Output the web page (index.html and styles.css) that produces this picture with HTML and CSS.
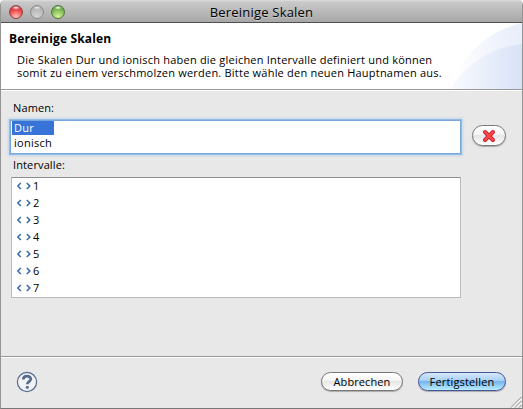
FILE: index.html
```
<!DOCTYPE html>
<html lang="de">
<head>
<meta charset="utf-8">
<title>Bereinige Skalen</title>
<link rel="stylesheet" href="styles.css">
</head>
<body>
<main class="window">
  <div class="titlebar">
    <div class="lights"><i class="light red"></i><i class="light grey"></i><i class="light green"></i></div>
    <span class="window-title">Bereinige Skalen</span>
  </div>
  <header class="banner">
    <svg class="banner-art" width="92" height="66" viewBox="0 0 92 66">
      <defs>
        <linearGradient id="a" x1="0" y1="0.6" x2="1" y2="0.3"><stop offset="0" stop-color="#fff"/><stop offset="1" stop-color="#e9eefb"/></linearGradient>
        <linearGradient id="b" x1="0" y1="0" x2="1" y2="0"><stop offset="0" stop-color="#fafbff"/><stop offset="1" stop-color="#d8e2f7"/></linearGradient>
      </defs>
      <path d="M18 66C32 34 56 8 92 0V66Z" fill="url(#a)"/>
      <path d="M20 66C34 45 56 25 92 21V66Z" fill="url(#b)"/>
    </svg>
    <h1>Bereinige Skalen</h1>
    <p><span class="line">Die Skalen Dur und ionisch haben die gleichen Intervalle definiert und können</span><span class="line">somit zu einem verschmolzen werden. Bitte wähle den neuen Hauptnamen aus.</span></p>
  </header>
  <section class="content">
    <label class="names-label">Namen:</label>
    <div class="names-row">
      <ul class="names"><li class="selected">Dur</li><li>ionisch</li></ul>
      <button class="button delete" aria-label="Löschen">
        <svg width="14" height="14" viewBox="0 0 14 14"><path d="M3 3L11 11M11 3L3 11" stroke="#c9202c" stroke-width="4" stroke-linecap="round"/><path d="M3 3L11 11M11 3L3 11" stroke="#fa4b50" stroke-width="2" stroke-linecap="round"/></svg>
      </button>
    </div>
    <label class="intervals-label">Intervalle:</label>
    <ul class="intervals">
      <li><svg width="14" height="8" viewBox="0 0 14 8"><path d="M3.8 1L.8 4L3.8 7M9.8 1L12.8 4L9.8 7"/></svg>1</li>
      <li><svg width="14" height="8" viewBox="0 0 14 8"><path d="M3.8 1L.8 4L3.8 7M9.8 1L12.8 4L9.8 7"/></svg>2</li>
      <li><svg width="14" height="8" viewBox="0 0 14 8"><path d="M3.8 1L.8 4L3.8 7M9.8 1L12.8 4L9.8 7"/></svg>3</li>
      <li><svg width="14" height="8" viewBox="0 0 14 8"><path d="M3.8 1L.8 4L3.8 7M9.8 1L12.8 4L9.8 7"/></svg>4</li>
      <li><svg width="14" height="8" viewBox="0 0 14 8"><path d="M3.8 1L.8 4L3.8 7M9.8 1L12.8 4L9.8 7"/></svg>5</li>
      <li><svg width="14" height="8" viewBox="0 0 14 8"><path d="M3.8 1L.8 4L3.8 7M9.8 1L12.8 4L9.8 7"/></svg>6</li>
      <li><svg width="14" height="8" viewBox="0 0 14 8"><path d="M3.8 1L.8 4L3.8 7M9.8 1L12.8 4L9.8 7"/></svg>7</li>
    </ul>
  </section>
  <footer class="footer">
    <svg class="help" width="22" height="22" viewBox="0 0 22 22">
      <circle cx="11" cy="11" r="9.6" fill="#f1f2f4" stroke="#566b8e" stroke-width="1.2"/>
      <path d="M7.3 8.6C7.3 4 14.8 4 14.8 8.1C14.8 10.6 11.3 10.6 11.3 13.3" fill="none" stroke="#566b8e" stroke-width="2.7"/>
      <rect x="9.8" y="15" width="3" height="2.8" rx="1" fill="#566b8e"/>
    </svg>
    <div class="actions">
      <button class="button cancel">Abbrechen</button>
      <button class="button finish">Fertigstellen</button>
    </div>
    <svg class="grip" width="12" height="12" viewBox="0 0 12 12"><path d="M1 11.5L11.5 1M5 11.5L11.5 5M9 11.5L11.5 9" stroke="#858585" fill="none"/><path d="M2.4 11.5L11.5 2.4M6.4 11.5L11.5 6.4" stroke="#fff" fill="none"/></svg>
  </footer>
</main>
</body>
</html>
```
FILE: styles.css
```
* { box-sizing: border-box; }
body { margin: 0; background: #fff; font-family: "Open Sans", "Noto Sans", sans-serif; font-size: 11px; color: #000; }
ul, h1, p { margin: 0; padding: 0; list-style: none; }
.window { width: 523px; height: 409px; display: flex; flex-direction: column; background: #e8e8e8; border: solid #949494; border-width: 0 1px 1px; border-bottom-color: #777; border-radius: 5px 5px 0 0; overflow: hidden; }
.titlebar { height: 23px; flex: none; display: grid; place-items: center; background: linear-gradient(#dedede 0, #c9c9c9 2px, #a7a7a7 22px); border-bottom: 1px solid #505050; }
.titlebar > * { grid-area: 1 / 1; }
.lights { justify-self: start; display: flex; gap: 7px; padding: 1px 0 0 8px; }
.light { width: 14px; height: 14px; border-radius: 50%; border: 1px solid #777; }
.red { border-color: #8e4545; background: radial-gradient(ellipse 4px 2px at 50% 14%, #fff, transparent), radial-gradient(circle at 50% 90%, #ffc5bf, #f04a4b 55%, #b92f35); }
.grey { border-color: #8b8b8b; background: radial-gradient(ellipse 4px 2px at 50% 14%, #eee, transparent), radial-gradient(circle at 50% 90%, #d5d5d5, #bababa 60%, #999); }
.green { border-color: #4d7a39; background: radial-gradient(ellipse 4px 2px at 50% 14%, #fff, transparent), radial-gradient(circle at 50% 90%, #d9f59f, #83bd57 55%, #4b8637); }
.window-title { font-size: 13px; line-height: 18px; padding-top: 2px; letter-spacing: .2px; text-shadow: 0 1px #ccc; }
.banner { height: 68px; flex: none; position: relative; padding: 8px 0 0 8px; background: #fff; border-bottom: 1px solid #fff; box-shadow: inset 0 -1px #999; }
.banner-art { position: absolute; right: 0; top: 0; }
h1 { position: relative; font-size: 12px; line-height: 16px; letter-spacing: .15px; }
.banner p { position: relative; padding: 6px 0 0 8px; line-height: 13px; white-space: nowrap; }
.line { display: block; letter-spacing: .215px; }
.content { flex: 1; padding: 9px 0 0 10px; }
.content label { display: block; height: 16px; line-height: 16px; padding-left: 2px; letter-spacing: .12px; }
.names-row { display: flex; align-items: center; gap: 12px; margin-top: 5px; }
.names { width: 449px; height: 32px; background: #fff; box-shadow: 0 0 0 1px #76a9d9, 0 0 0 2px #93bde3, 0 0 2px 3px #c3d7ea; padding: 0 0 0 1px; letter-spacing: .25px; }
.names li { width: 42px; height: 15px; line-height: 15px; padding-left: 2px; }
.names .selected { height: 14px; line-height: 14px; background: #3873d8; color: #fff; }
.button { height: 19px; padding: 0; border: 1px solid #777; border-radius: 10px; background: linear-gradient(#fff, #f4f4f4 45%, #e6e6e6 50%, #fff); font: inherit; color: #000; box-shadow: 0 1px 1px #aaa; display: flex; align-items: center; justify-content: center; }
.delete { width: 34px; height: 21px; border-radius: 11px; margin-top: -3px; }
.intervals-label { margin-top: 4px; }
.intervals { width: 450px; height: 121px; margin-top: 4px; background: #fff; border: 1px solid #bbb; border-top-color: #8e8e8e; padding-left: 5px; }
.intervals li { height: 17px; line-height: 15px; padding-bottom: 2px; display: flex; align-items: center; gap: 2px; }
.intervals path { fill: none; stroke: #3a6ea5; stroke-width: 1.6; }
.footer { height: 52px; flex: none; position: relative; border-top: 1px solid #999; box-shadow: inset 0 1px #fff; display: flex; justify-content: space-between; padding: 14px 16px 0 15px; }
.actions { display: flex; gap: 15px; padding-top: 1px; }
.cancel { width: 82px; letter-spacing: .1px; }
.finish { width: 88px; letter-spacing: .15px; border-color: #46569d; background: linear-gradient(#d5e8fa, #a9d0f5 45%, #75b5ee 50%, #b9edff); }
.grip { position: absolute; right: 0; bottom: 0; }
```
